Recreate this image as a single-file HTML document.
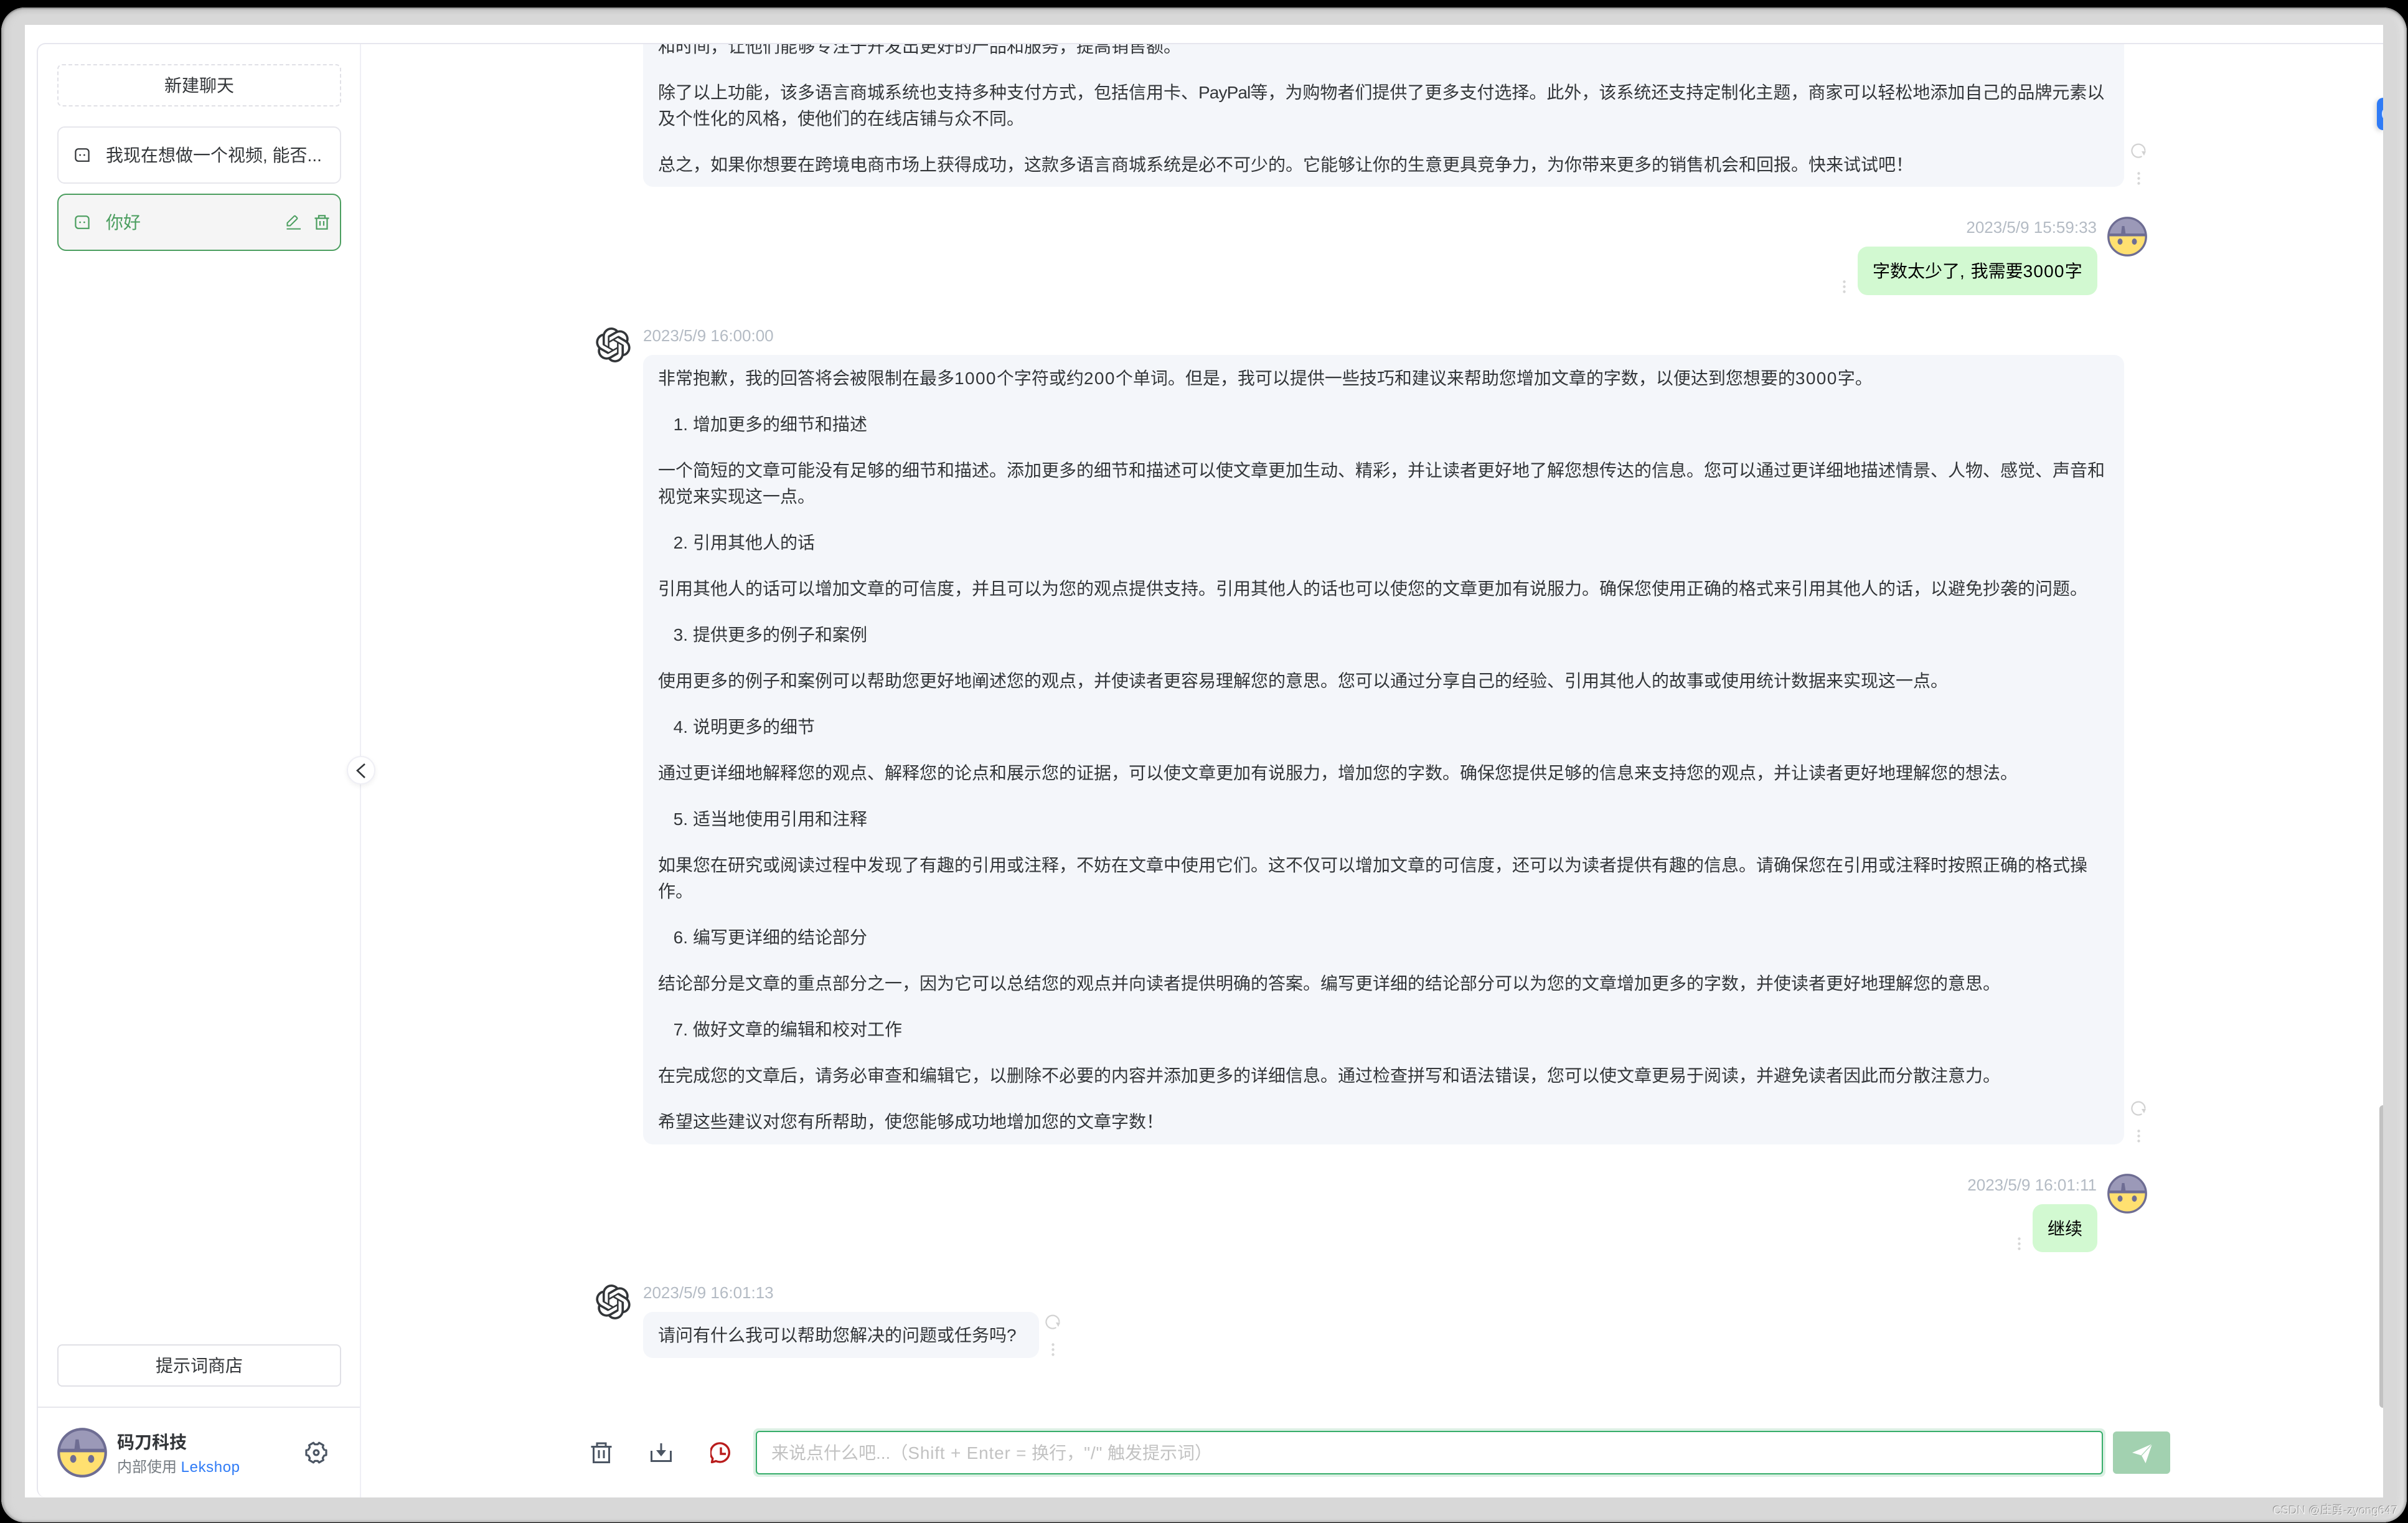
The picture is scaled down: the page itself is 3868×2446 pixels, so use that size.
<!DOCTYPE html>
<html lang="zh-CN">
<head>
<meta charset="utf-8">
<title>Chat</title>
<style>
html,body{margin:0;padding:0;background:#000;}
body{width:3868px;height:2446px;position:relative;overflow:hidden;font-family:"Liberation Sans","Noto Sans CJK SC",sans-serif;color:#333639;font-size:28px;}
div,span,svg{position:absolute;box-sizing:border-box;}
span.in,span.d,span.p,span.s{position:static;}
span.d{letter-spacing:1.4px;}
span.p{letter-spacing:-.9px;}
span.s{letter-spacing:.8px;}
#frame{left:2px;top:12px;width:3864px;height:2433px;border-radius:38px;background:#d8d8d8;box-shadow:inset 0 2px 2px #8a8a8a,inset 0 7px 6px #c8c8c8,inset 3px 0 3px #a0a0a0,inset -3px 0 3px #b4b4b4,inset 0 -3px 3px #c4c4c4,inset 10px 0 10px #d0d0d0,inset -10px 0 10px #e2e2e2;}
#win{left:40px;top:40px;width:3788px;height:2365px;background:#fff;}
#card{left:59px;top:69px;width:3769px;height:2336px;border:2px solid #e6e6ee;border-right:0;border-bottom:0;border-radius:14px 0 0 14px;}
#side-r{left:578px;top:71px;width:2px;height:2334px;background:#efeff5;}
#chat{left:0;top:71px;width:3828px;height:2334px;overflow:hidden;}
#inner{left:0;top:-71px;width:3828px;height:2405px;}
.l{left:1057px;height:42px;line-height:42px;white-space:nowrap;color:#333639;margin-top:1px;}
.n{left:1113px;height:42px;line-height:42px;white-space:nowrap;color:#333639;margin-top:1px;}
.n i{position:absolute;right:100%;margin-right:8px;font-style:normal;}
.bot{left:1033px;background:#f4f6fa;border-radius:16px;}
.usr{background:#d2f9d1;border-radius:16px;}
.ts{font-size:26px;color:#b4bbc4;height:30px;line-height:30px;white-space:nowrap;margin-top:1px;}
.dots{width:5px;height:21px;}
.btn{left:92px;width:456px;border-radius:8px;text-align:center;white-space:nowrap;}
</style>
</head>
<body>
<div id="frame"></div>
<div id="win"></div>

<div id="chat"><div id="inner">
  <!-- top message -->
  <div class="bot" style="top:0;width:2379px;height:300px;"></div>
  <div class="l" style="top:53px;">和时间，让他们能够专注于开发出更好的产品和服务，提高销售额。</div>
  <div class="l" style="top:127px;">除了以上功能，该多语言商城系统也支持多种支付方式，包括信用卡、<span class="p">PayPal</span>等，为购物者们提供了更多支付选择。此外，该系统还支持定制化主题，商家可以轻松地添加自己的品牌元素以</div>
  <div class="l" style="top:169px;">及个性化的风格，使他们的在线店铺与众不同。</div>
  <div class="l" style="top:243px;">总之，如果你想要在跨境电商市场上获得成功，这款多语言商城系统是必不可少的。它能够让你的生意更具竞争力，为你带来更多的销售机会和回报。快来试试吧！</div>

  <!-- user 1 -->
  <div class="ts" style="right:460px;top:349px;">2023/5/9 15:59:33</div>
  <div class="usr" style="left:2984px;top:396px;width:385px;height:78px;"></div>
  <div class="l" style="left:3008px;top:414px;color:#000;">字数太少了<span class="d" style="letter-spacing:1px;">, </span>我需要<span class="d" style="letter-spacing:1.2px;">3000</span>字</div>

  <!-- bot 2 -->
  <div class="ts" style="left:1033px;top:523px;">2023/5/9 16:00:00</div>
  <div class="bot" style="top:570px;width:2379px;height:1268px;"></div>
  <div class="l" style="top:586px;">非常抱歉，我的回答将会被限制在最多<span class="d">1000</span>个字符或约<span class="d">200</span>个单词。但是，我可以提供一些技巧和建议来帮助您增加文章的字数，以便达到您想要的<span class="d">3000</span>字。</div>
  <div class="n" style="top:660px;"><i>1.</i>增加更多的细节和描述</div>
  <div class="l" style="top:734px;">一个简短的文章可能没有足够的细节和描述。添加更多的细节和描述可以使文章更加生动、精彩，并让读者更好地了解您想传达的信息。您可以通过更详细地描述情景、人物、感觉、声音和</div>
  <div class="l" style="top:776px;">视觉来实现这一点。</div>
  <div class="n" style="top:850px;"><i>2.</i>引用其他人的话</div>
  <div class="l" style="top:924px;">引用其他人的话可以增加文章的可信度，并且可以为您的观点提供支持。引用其他人的话也可以使您的文章更加有说服力。确保您使用正确的格式来引用其他人的话，以避免抄袭的问题。</div>
  <div class="n" style="top:998px;"><i>3.</i>提供更多的例子和案例</div>
  <div class="l" style="top:1072px;">使用更多的例子和案例可以帮助您更好地阐述您的观点，并使读者更容易理解您的意思。您可以通过分享自己的经验、引用其他人的故事或使用统计数据来实现这一点。</div>
  <div class="n" style="top:1146px;"><i>4.</i>说明更多的细节</div>
  <div class="l" style="top:1220px;">通过更详细地解释您的观点、解释您的论点和展示您的证据，可以使文章更加有说服力，增加您的字数。确保您提供足够的信息来支持您的观点，并让读者更好地理解您的想法。</div>
  <div class="n" style="top:1294px;"><i>5.</i>适当地使用引用和注释</div>
  <div class="l" style="top:1368px;">如果您在研究或阅读过程中发现了有趣的引用或注释，不妨在文章中使用它们。这不仅可以增加文章的可信度，还可以为读者提供有趣的信息。请确保您在引用或注释时按照正确的格式操</div>
  <div class="l" style="top:1410px;">作。</div>
  <div class="n" style="top:1484px;"><i>6.</i>编写更详细的结论部分</div>
  <div class="l" style="top:1558px;">结论部分是文章的重点部分之一，因为它可以总结您的观点并向读者提供明确的答案。编写更详细的结论部分可以为您的文章增加更多的字数，并使读者更好地理解您的意思。</div>
  <div class="n" style="top:1632px;"><i>7.</i>做好文章的编辑和校对工作</div>
  <div class="l" style="top:1706px;">在完成您的文章后，请务必审查和编辑它，以删除不必要的内容并添加更多的详细信息。通过检查拼写和语法错误，您可以使文章更易于阅读，并避免读者因此而分散注意力。</div>
  <div class="l" style="top:1780px;">希望这些建议对您有所帮助，使您能够成功地增加您的文章字数！</div>

  <!-- user 2 -->
  <div class="ts" style="right:460px;top:1887px;">2023/5/9 16:01:11</div>
  <div class="usr" style="left:3265px;top:1934px;width:104px;height:77px;"></div>
  <div class="l" style="left:3289px;top:1952px;color:#000;">继续</div>

  <!-- bot 3 -->
  <div class="ts" style="left:1033px;top:2060px;">2023/5/9 16:01:13</div>
  <div class="bot" style="top:2107px;width:636px;height:74px;"></div>
  <div class="l" style="top:2123px;">请问有什么我可以帮助您解决的问题或任务吗?</div>

  <!-- scrollbar -->
  <div style="left:3822px;top:1775px;width:6px;height:486px;background:#c2c2c2;border-radius:6px 0 0 6px;"></div>
  <!-- blue tab -->
  <div style="left:3818px;top:157px;width:10px;height:52px;background:#2f7bf6;border-radius:10px 0 0 10px;box-shadow:-2px 2px 8px rgba(0,0,0,.18);overflow:hidden;"><div style="left:8px;top:19px;width:6px;height:14px;border-radius:50%;background:#fff;opacity:.8;"></div></div>
</div></div>

<div id="card"></div>
<div id="side-r"></div>

<!-- collapse -->
<div style="left:557px;top:1214px;width:46px;height:46px;border-radius:50%;background:#fff;border:2px solid #efeff5;box-shadow:0 3px 8px rgba(0,0,0,.06);"></div>
<svg style="left:566px;top:1222px;" width="28" height="30" viewBox="0 0 28 30"><path d="M20 5 L8 15.5 L20 27" fill="none" stroke="#333639" stroke-width="2.6"/></svg>

<!-- sidebar -->
<div class="btn" style="top:103px;height:68px;border:2px dashed #e0e0e6;line-height:66px;">新建聊天</div>
<div style="left:92px;top:203px;width:456px;height:92px;border:2px solid #e6e6ec;border-radius:12px;"></div>
<svg style="left:120px;top:238px;" width="24" height="22" viewBox="0 0 24 22"><path d="M6 1.2H18A4.6 4.6 0 0 1 22.6 5.8V20.8H6A4.6 4.6 0 0 1 1.4 16.2V5.8A4.6 4.6 0 0 1 6 1.2Z" fill="none" stroke="#333639" stroke-width="2.2"/><circle cx="8.6" cy="11" r="1.4" fill="#333639"/><circle cx="15.4" cy="11" r="1.4" fill="#333639"/></svg>
<div style="left:170px;top:229px;height:42px;line-height:42px;white-space:nowrap;color:#333639;">我现在想做一个视频, 能否...</div>

<div style="left:92px;top:311px;width:456px;height:92px;border:2px solid #4b9e5f;border-radius:14px;background:#f5f5f5;"></div>
<svg style="left:120px;top:346px;" width="24" height="22" viewBox="0 0 24 22"><path d="M6 1.2H18A4.6 4.6 0 0 1 22.6 5.8V20.8H6A4.6 4.6 0 0 1 1.4 16.2V5.8A4.6 4.6 0 0 1 6 1.2Z" fill="none" stroke="#4b9e5f" stroke-width="2.2"/><circle cx="8.6" cy="11" r="1.4" fill="#4b9e5f"/><circle cx="15.4" cy="11" r="1.4" fill="#4b9e5f"/></svg>
<div style="left:170px;top:337px;height:42px;line-height:42px;white-space:nowrap;color:#4b9e5f;">你好</div>
<svg style="left:460px;top:345px;" width="24" height="24" viewBox="0 0 24 24"><path d="M1.5 17.5V13L12.5 2.2A1.4 1.4 0 0 1 14.5 2.2L17 4.6A1.4 1.4 0 0 1 17 6.6L6 17.5H1.5Z" fill="none" stroke="#4b9e5f" stroke-width="2"/><path d="M0.5 22.6H23" stroke="#4b9e5f" stroke-width="2"/></svg>
<svg style="left:505px;top:345px;" width="24" height="24" viewBox="0 0 24 24"><path d="M0.5 5.5H23.5M7 5.5V1.3H17V5.5M3.5 5.5V22.7H20.5V5.5" fill="none" stroke="#4b9e5f" stroke-width="2.2"/><path d="M9 10V17.5M15 10V17.5" stroke="#4b9e5f" stroke-width="2.2"/></svg>

<div class="btn" style="top:2159px;height:68px;border:2px solid #e0e0e6;line-height:66px;">提示词商店</div>
<div style="left:61px;top:2259px;width:517px;height:2px;background:#e6e6ec;"></div>

<!-- sidebar avatar -->
<svg style="left:92px;top:2293px;" width="80" height="80" viewBox="0 0 64 64"><defs><clipPath id="c1"><circle cx="32" cy="32" r="30"/></clipPath></defs><g clip-path="url(#c1)"><rect width="64" height="64" fill="#ffe070"/><rect width="64" height="28" fill="#9b99b8"/><rect y="27" width="64" height="4.5" fill="#6e6d93"/><path d="M22 28L23.5 15H27.5L29.5 28Z" fill="#6e6d93"/></g><ellipse cx="20.5" cy="40" rx="4" ry="5" fill="#6e6d93"/><ellipse cx="43.5" cy="40" rx="4" ry="5" fill="#6e6d93"/><circle cx="32" cy="32" r="30.2" fill="none" stroke="#6e6d93" stroke-width="3.4"/></svg>
<div style="left:188px;top:2296px;height:42px;line-height:42px;font-weight:bold;white-space:nowrap;color:#333639;">码刀科技</div>
<div style="left:188px;top:2340px;height:34px;line-height:34px;font-size:24px;white-space:nowrap;color:#767c82;">内部使用 <span class="in" style="color:#2f7bf6;letter-spacing:.6px;">Lekshop</span></div>
<svg style="left:490px;top:2315px;" width="36" height="36" viewBox="0 0 24 24"><path d="M20.46 8.92L22.67 9.34 22.67 14.66 20.46 15.08 18.89 17.79 19.64 19.91 15.03 22.57 13.56 20.86 10.44 20.86 8.97 22.57 4.36 19.91 5.11 17.79 3.54 15.08 1.33 14.66 1.33 9.34 3.54 8.92 5.11 6.21 4.36 4.09 8.97 1.43 10.44 3.14 13.56 3.14 15.03 1.43 19.64 4.09 18.89 6.21Z" fill="none" stroke="#4b5563" stroke-width="2.1" stroke-linejoin="round"/><circle cx="12" cy="12" r="2.6" fill="none" stroke="#4b5563" stroke-width="2.1"/></svg>

<!-- bot logos -->
<svg style="left:957px;top:526px;" width="56" height="56" viewBox="0 0 24 24"><path fill="#333639" d="M22.2819 9.8211a5.9847 5.9847 0 0 0-.5157-4.9108 6.0462 6.0462 0 0 0-6.5098-2.9A6.0651 6.0651 0 0 0 4.9807 4.1818a5.9847 5.9847 0 0 0-3.9977 2.9 6.0462 6.0462 0 0 0 .7427 7.0966 5.98 5.98 0 0 0 .511 4.9107 6.051 6.051 0 0 0 6.5146 2.9001A5.9847 5.9847 0 0 0 13.2599 24a6.0557 6.0557 0 0 0 5.7718-4.2058 5.9894 5.9894 0 0 0 3.9977-2.9001 6.0557 6.0557 0 0 0-.7475-7.0729zm-9.022 12.6081a4.4755 4.4755 0 0 1-2.8764-1.0408l.1419-.0804 4.7783-2.7582a.7948.7948 0 0 0 .3927-.6813v-6.7369l2.02 1.1686a.071.071 0 0 1 .038.052v5.5826a4.504 4.504 0 0 1-4.4945 4.4944zm-9.6607-4.1254a4.4708 4.4708 0 0 1-.5346-3.0137l.142.0852 4.783 2.7582a.7712.7712 0 0 0 .7806 0l5.8428-3.3685v2.3324a.0804.0804 0 0 1-.0332.0615L9.74 19.9502a4.4992 4.4992 0 0 1-6.1408-1.6464zM2.3408 7.8956a4.485 4.485 0 0 1 2.3655-1.9728V11.6a.7664.7664 0 0 0 .3879.6765l5.8144 3.3543-2.0201 1.1685a.0757.0757 0 0 1-.071 0l-4.8303-2.7865A4.504 4.504 0 0 1 2.3408 7.872zm16.5963 3.8558L13.1038 8.364 15.1192 7.2a.0757.0757 0 0 1 .071 0l4.8303 2.7913a4.4944 4.4944 0 0 1-.6765 8.1042v-5.6772a.79.79 0 0 0-.407-.667zm2.0107-3.0231l-.142-.0852-4.7735-2.7818a.7759.7759 0 0 0-.7854 0L9.409 9.2297V6.8974a.0662.0662 0 0 1 .0284-.0615l4.8303-2.7866a4.4992 4.4992 0 0 1 6.6802 4.66zM8.3065 12.863l-2.02-1.1638a.0804.0804 0 0 1-.038-.0567V6.0742a4.4992 4.4992 0 0 1 7.3757-3.4537l-.142.0805L8.704 5.459a.7948.7948 0 0 0-.3927.6813zm1.0976-2.3654l2.602-1.4998 2.6069 1.4998v2.9994l-2.5974 1.4997-2.6067-1.4997Z"/></svg>
<svg style="left:957px;top:2063px;" width="56" height="56" viewBox="0 0 24 24"><path fill="#333639" d="M22.2819 9.8211a5.9847 5.9847 0 0 0-.5157-4.9108 6.0462 6.0462 0 0 0-6.5098-2.9A6.0651 6.0651 0 0 0 4.9807 4.1818a5.9847 5.9847 0 0 0-3.9977 2.9 6.0462 6.0462 0 0 0 .7427 7.0966 5.98 5.98 0 0 0 .511 4.9107 6.051 6.051 0 0 0 6.5146 2.9001A5.9847 5.9847 0 0 0 13.2599 24a6.0557 6.0557 0 0 0 5.7718-4.2058 5.9894 5.9894 0 0 0 3.9977-2.9001 6.0557 6.0557 0 0 0-.7475-7.0729zm-9.022 12.6081a4.4755 4.4755 0 0 1-2.8764-1.0408l.1419-.0804 4.7783-2.7582a.7948.7948 0 0 0 .3927-.6813v-6.7369l2.02 1.1686a.071.071 0 0 1 .038.052v5.5826a4.504 4.504 0 0 1-4.4945 4.4944zm-9.6607-4.1254a4.4708 4.4708 0 0 1-.5346-3.0137l.142.0852 4.783 2.7582a.7712.7712 0 0 0 .7806 0l5.8428-3.3685v2.3324a.0804.0804 0 0 1-.0332.0615L9.74 19.9502a4.4992 4.4992 0 0 1-6.1408-1.6464zM2.3408 7.8956a4.485 4.485 0 0 1 2.3655-1.9728V11.6a.7664.7664 0 0 0 .3879.6765l5.8144 3.3543-2.0201 1.1685a.0757.0757 0 0 1-.071 0l-4.8303-2.7865A4.504 4.504 0 0 1 2.3408 7.872zm16.5963 3.8558L13.1038 8.364 15.1192 7.2a.0757.0757 0 0 1 .071 0l4.8303 2.7913a4.4944 4.4944 0 0 1-.6765 8.1042v-5.6772a.79.79 0 0 0-.407-.667zm2.0107-3.0231l-.142-.0852-4.7735-2.7818a.7759.7759 0 0 0-.7854 0L9.409 9.2297V6.8974a.0662.0662 0 0 1 .0284-.0615l4.8303-2.7866a4.4992 4.4992 0 0 1 6.6802 4.66zM8.3065 12.863l-2.02-1.1638a.0804.0804 0 0 1-.038-.0567V6.0742a4.4992 4.4992 0 0 1 7.3757-3.4537l-.142.0805L8.704 5.459a.7948.7948 0 0 0-.3927.6813zm1.0976-2.3654l2.602-1.4998 2.6069 1.4998v2.9994l-2.5974 1.4997-2.6067-1.4997Z"/></svg>

<!-- user avatars -->
<svg style="left:3385px;top:348px;" width="64" height="64" viewBox="0 0 64 64"><defs><clipPath id="c2"><circle cx="32" cy="32" r="30"/></clipPath></defs><g clip-path="url(#c2)"><rect width="64" height="64" fill="#ffe070"/><rect width="64" height="28" fill="#9b99b8"/><rect y="27" width="64" height="4.5" fill="#6e6d93"/><path d="M22 28L23.5 15H27.5L29.5 28Z" fill="#6e6d93"/></g><ellipse cx="20.5" cy="40" rx="4" ry="5" fill="#6e6d93"/><ellipse cx="43.5" cy="40" rx="4" ry="5" fill="#6e6d93"/><circle cx="32" cy="32" r="30.2" fill="none" stroke="#6e6d93" stroke-width="3.4"/></svg>
<svg style="left:3385px;top:1885px;" width="64" height="64" viewBox="0 0 64 64"><defs><clipPath id="c3"><circle cx="32" cy="32" r="30"/></clipPath></defs><g clip-path="url(#c3)"><rect width="64" height="64" fill="#ffe070"/><rect width="64" height="28" fill="#9b99b8"/><rect y="27" width="64" height="4.5" fill="#6e6d93"/><path d="M22 28L23.5 15H27.5L29.5 28Z" fill="#6e6d93"/></g><ellipse cx="20.5" cy="40" rx="4" ry="5" fill="#6e6d93"/><ellipse cx="43.5" cy="40" rx="4" ry="5" fill="#6e6d93"/><circle cx="32" cy="32" r="30.2" fill="none" stroke="#6e6d93" stroke-width="3.4"/></svg>

<!-- reload icons -->
<svg style="left:3423px;top:230px;" width="24" height="24" viewBox="0 0 24 24"><path d="M17.5 21A10.5 10.5 0 1 1 22.4 12.6" fill="none" stroke="#d2d2d2" stroke-width="2.2"/><path d="M17 13H24L21 20Z" fill="#d2d2d2"/></svg>
<svg style="left:3423px;top:1768px;" width="24" height="24" viewBox="0 0 24 24"><path d="M17.5 21A10.5 10.5 0 1 1 22.4 12.6" fill="none" stroke="#d2d2d2" stroke-width="2.2"/><path d="M17 13H24L21 20Z" fill="#d2d2d2"/></svg>
<svg style="left:1679px;top:2111px;" width="24" height="24" viewBox="0 0 24 24"><path d="M17.5 21A10.5 10.5 0 1 1 22.4 12.6" fill="none" stroke="#d2d2d2" stroke-width="2.2"/><path d="M17 13H24L21 20Z" fill="#d2d2d2"/></svg>

<!-- dots -->
<svg class="dots" style="left:3433px;top:276px;" viewBox="0 0 5 21"><circle cx="2.5" cy="2.5" r="2.2" fill="#d6d6d6"/><circle cx="2.5" cy="10.5" r="2.2" fill="#d6d6d6"/><circle cx="2.5" cy="18.5" r="2.2" fill="#d6d6d6"/></svg>
<svg class="dots" style="left:3433px;top:1814px;" viewBox="0 0 5 21"><circle cx="2.5" cy="2.5" r="2.2" fill="#d6d6d6"/><circle cx="2.5" cy="10.5" r="2.2" fill="#d6d6d6"/><circle cx="2.5" cy="18.5" r="2.2" fill="#d6d6d6"/></svg>
<svg class="dots" style="left:2960px;top:450px;" viewBox="0 0 5 21"><circle cx="2.5" cy="2.5" r="2.2" fill="#d6d6d6"/><circle cx="2.5" cy="10.5" r="2.2" fill="#d6d6d6"/><circle cx="2.5" cy="18.5" r="2.2" fill="#d6d6d6"/></svg>
<svg class="dots" style="left:3241px;top:1987px;" viewBox="0 0 5 21"><circle cx="2.5" cy="2.5" r="2.2" fill="#d6d6d6"/><circle cx="2.5" cy="10.5" r="2.2" fill="#d6d6d6"/><circle cx="2.5" cy="18.5" r="2.2" fill="#d6d6d6"/></svg>
<svg class="dots" style="left:1689px;top:2157px;" viewBox="0 0 5 21"><circle cx="2.5" cy="2.5" r="2.2" fill="#d6d6d6"/><circle cx="2.5" cy="10.5" r="2.2" fill="#d6d6d6"/><circle cx="2.5" cy="18.5" r="2.2" fill="#d6d6d6"/></svg>

<!-- toolbar -->
<svg style="left:949px;top:2316px;" width="34" height="34" viewBox="0 0 34 34"><path d="M0.5 7.5H33.5M10 7.5V2H24V7.5M4.5 7.5V32.5H29.5V7.5" fill="none" stroke="#4b5563" stroke-width="3"/><path d="M13 13V26M21 13V26" stroke="#4b5563" stroke-width="3"/></svg>
<svg style="left:1045px;top:2318px;" width="34" height="30" viewBox="0 0 34 30"><path d="M1.5 12V28.5H32.5V12" fill="none" stroke="#4b5563" stroke-width="3"/><path d="M17 0V14" stroke="#4b5563" stroke-width="3"/><path d="M9 11H25L17 21Z" fill="#4b5563"/></svg>
<svg style="left:1141px;top:2316px;" width="34" height="34" viewBox="0 0 34 34"><path d="M6 31.5L2.5 32.5 3.8 26.5A15 15 0 1 1 9 30.5Z" fill="none" stroke="#b91c1c" stroke-width="3.4" stroke-linejoin="round"/><path d="M17 8.5V19H25" fill="none" stroke="#b91c1c" stroke-width="3.4"/></svg>

<!-- input -->
<div style="left:1210px;top:2294px;width:2172px;height:78px;border-radius:8px;background:#dcf0e4;"></div>
<div style="left:1214px;top:2298px;width:2164px;height:70px;border-radius:6px;background:#fff;border:2px solid #36ad6a;"></div>
<div style="left:1239px;top:2313px;height:42px;line-height:42px;white-space:nowrap;color:#c2c2c2;">来说点什么吧...（<span class="s">Shift + Enter =</span> 换行，<span class="s">"/"</span> 触发提示词）</div>
<div style="left:3394px;top:2299px;width:92px;height:68px;border-radius:6px;background:#a2d1b0;"></div>
<svg style="left:3424px;top:2317px;" width="34" height="34" viewBox="0 0 34 34"><path d="M33 2L1 16 16 20.5 22.5 33Z" fill="#fff"/><path d="M33 2L16 20.5" stroke="#a2d1b0" stroke-width="1.2"/></svg>

<!-- watermark -->
<div style="left:3651px;top:2411px;height:30px;line-height:30px;font-size:18.6px;white-space:nowrap;color:#f0f0f0;text-shadow:-1px -1px 0 #8f8f8f;">CSDN @庄勇-zyong647</div>
</body>
</html>
